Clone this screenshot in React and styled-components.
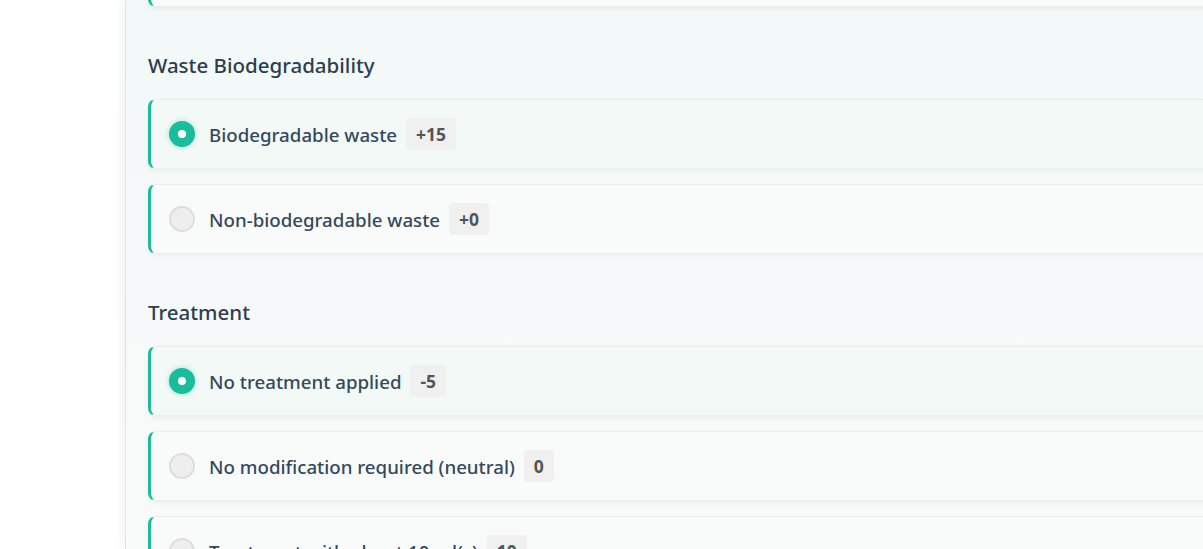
import React from 'react';
import styled, { createGlobalStyle } from 'styled-components';

const sections = [
  {
    title: 'Waste Biodegradability',
    options: [
      { id: 'bio', label: 'Biodegradable waste', score: '+15', selected: true },
      { id: 'nonbio', label: 'Non-biodegradable waste', score: '+0' },
    ],
  },
  {
    title: 'Treatment',
    options: [
      { id: 'none', label: 'No treatment applied', score: '-5', selected: true },
      { id: 'neutral', label: 'No modification required (neutral)', score: '0' },
      { id: 'agent', label: 'Treatment with about 10 ml(s)', score: '10' },
    ],
  },
];

const App = () => {
  return (
    <>
      <GlobalStyle />
      <Page>
        <Gutter />
        <Panel>
          <Card $cut />
          {sections.map(section => (
            <Section key={section.title}>
              <SectionTitle>{section.title}</SectionTitle>
              <OptionList>
                {section.options.map(option => (
                  <Card key={option.id} $selected={option.selected}>
                    <Radio $selected={option.selected} />
                    <Label>{option.label}</Label>
                    <Score>{option.score}</Score>
                  </Card>
                ))}
              </OptionList>
            </Section>
          ))}
        </Panel>
      </Page>
    </>
  );
};

const GlobalStyle = createGlobalStyle`
  html, body {
    margin: 0;
    background: #ffffff;
    overflow: hidden;
  }
  body {
    font-family: "Noto Sans", "Open Sans", sans-serif;
  }
`;

const Page = styled.div`
  display: flex;
  height: 549px;
  overflow: hidden;
`;

const Gutter = styled.div`
  width: 125px;
  flex-shrink: 0;
  background: #ffffff;
`;

const Panel = styled.div`
  flex: 1;
  margin-right: -40px;
  padding-left: 22px;
  border-left: 1px solid #e2e4e4;
  box-shadow: -3px 0 10px rgba(0, 0, 0, 0.05);
  background: linear-gradient(to bottom, #f2f8f8 0%, #f6f9f9 45%, #f9fafa 100%);
`;

const Section = styled.section`
  margin-top: 46px;
`;

const SectionTitle = styled.h2`
  margin: 0 0 22px;
  font-size: 20.5px;
  line-height: 24px;
  font-weight: 500;
  color: #2c3e50;
`;

const OptionList = styled.div`
  display: flex;
  flex-direction: column;
  gap: 15px;
`;

const Card = styled.div`
  display: flex;
  align-items: center;
  flex-shrink: 0;
  height: 70px;
  box-sizing: border-box;
  margin-top: ${p => (p.$cut ? '-63px' : '0')};
  padding-left: 18px;
  border: 1px solid #eceeee;
  border-left: 3px solid #1abc9c;
  border-radius: 8px;
  background: ${p => (p.$selected ? '#f3f9f6' : '#f9fbfb')};
  box-shadow: 0 2px 5px rgba(0, 0, 0, 0.05);
`;

const Radio = styled.span`
  position: relative;
  width: 26px;
  height: 26px;
  box-sizing: border-box;
  border-radius: 50%;
  flex-shrink: 0;
  background: ${p => (p.$selected ? '#1abc9c' : '#eeeeee')};
  border: 2px solid ${p => (p.$selected ? '#1abc9c' : '#dddddd')};
  box-shadow: ${p => (p.$selected ? '0 0 4px 1px rgba(26, 188, 156, 0.25)' : 'none')};

  &::after {
    content: '';
    display: ${p => (p.$selected ? 'block' : 'none')};
    position: absolute;
    top: 50%;
    left: 50%;
    width: 8px;
    height: 8px;
    margin: -4px 0 0 -4px;
    border-radius: 50%;
    background: #ffffff;
  }
`;

const Label = styled.span`
  margin-left: 14px;
  font-size: 18.7px;
  font-weight: 500;
  color: #34495e;
`;

const Score = styled.span`
  margin-left: 9px;
  padding: 0 10px;
  height: 32px;
  display: inline-flex;
  align-items: center;
  border-radius: 4px;
  background: #f0f0f0;
  font-size: 17.5px;
  font-weight: 700;
  color: #555555;
`;

export default App;
